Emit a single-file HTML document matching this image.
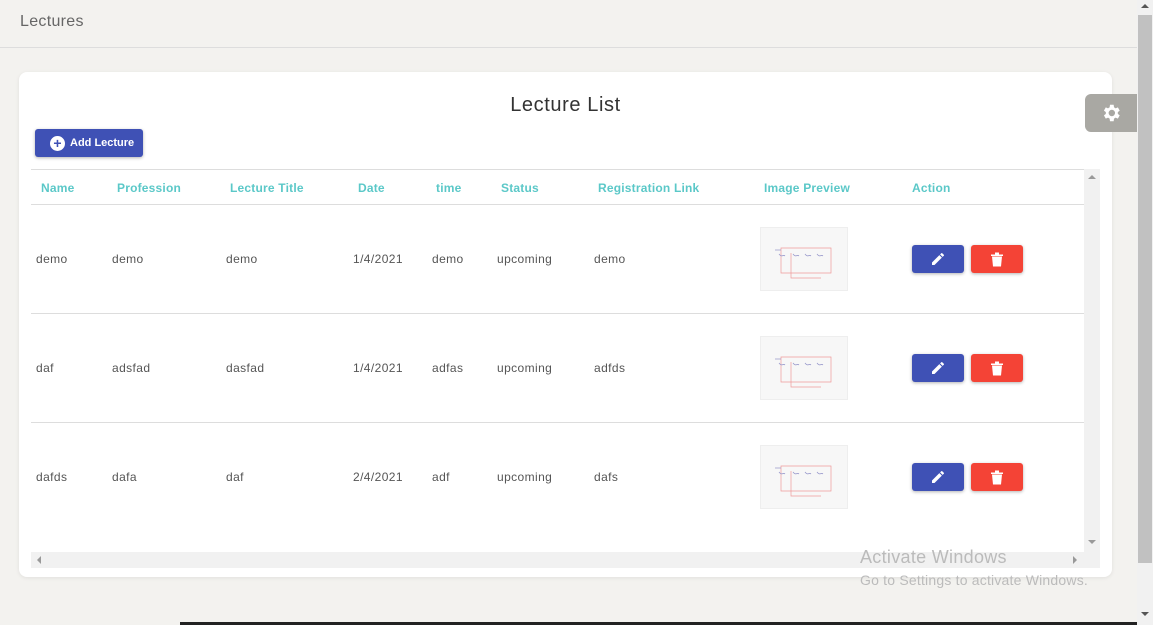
<!DOCTYPE html>
<html><head><style>
*{margin:0;padding:0;box-sizing:border-box}
body{width:1153px;height:625px;overflow:hidden;background:#f3f2ef;font-family:"Liberation Sans",sans-serif;position:relative;font-size:12px;color:#444}
.a{position:absolute}
.hd{color:#5bc8c8;font-weight:bold;font-size:12px;top:181px;letter-spacing:.2px}
.c{font-size:12px;color:#555;letter-spacing:.4px}
.btn{position:absolute;width:52px;height:28px;border-radius:3px;box-shadow:0 1px 3px rgba(0,0,0,.3);display:flex;align-items:center;justify-content:center}
.img{position:absolute;width:88px;height:64px;background:#f7f7f7;border:1px solid #eee}
</style></head><body>
<div class="a" style="left:20px;top:13px;font-size:16px;color:#666;letter-spacing:.3px">Lectures</div>
<div class="a" style="left:0;top:47px;width:1137px;height:1px;background:#ddd"></div>
<div class="a" style="left:19px;top:72px;width:1093px;height:505px;background:#fff;border-radius:8px;box-shadow:0 1px 4px rgba(0,0,0,.08)"></div>
<div class="a" style="left:0;top:94px;width:1131px;text-align:center;font-size:20px;color:#333;letter-spacing:.6px">Lecture List</div>
<div class="a" style="left:35px;top:129px;width:108px;height:28px;background:#3f51b5;border-radius:3px;box-shadow:0 1px 3px rgba(0,0,0,.3);color:#fff;font-weight:bold;font-size:11px;display:flex;align-items:center;padding-left:15px"><span style="width:15px;height:15px;border-radius:50%;background:#fff;color:#3f51b5;display:inline-flex;align-items:center;justify-content:center;font-size:14px;margin-right:5px;line-height:1">+</span>Add Lecture</div>
<div class="a" style="left:31px;top:169px;width:1053px;height:1px;background:#ddd"></div>
<div class="a" style="left:31px;top:204px;width:1053px;height:1px;background:#ddd"></div>
<div class="a" style="left:31px;top:313px;width:1053px;height:1px;background:#ddd"></div>
<div class="a" style="left:31px;top:422px;width:1053px;height:1px;background:#ddd"></div>
<div class="a" style="left:1084px;top:169px;width:16px;height:383px;background:#f1f1f1"></div>
<div class="a" style="left:1088px;top:175px;border:4px solid transparent;border-bottom:4px solid #999;border-top:0"></div>
<div class="a" style="left:1088px;top:540px;border:4px solid transparent;border-top:4px solid #999;border-bottom:0"></div>
<div class="a" style="left:31px;top:552px;width:1069px;height:16px;background:#f1f1f1"></div>
<div class="a" style="left:37px;top:556px;border:4px solid transparent;border-right:4px solid #999;border-left:0"></div>
<div class="a" style="left:1073px;top:556px;border:4px solid transparent;border-left:4px solid #999;border-right:0"></div>
<div class="a hd" style="left:41px">Name</div>
<div class="a hd" style="left:117px">Profession</div>
<div class="a hd" style="left:230px">Lecture Title</div>
<div class="a hd" style="left:358px">Date</div>
<div class="a hd" style="left:436px">time</div>
<div class="a hd" style="left:501px">Status</div>
<div class="a hd" style="left:598px">Registration Link</div>
<div class="a hd" style="left:764px">Image Preview</div>
<div class="a hd" style="left:912px">Action</div>

<div class="a c" style="top:252px;left:36px">demo</div><div class="a c" style="top:252px;left:112px">demo</div><div class="a c" style="top:252px;left:226px">demo</div><div class="a c" style="top:252px;left:353px">1/4/2021</div><div class="a c" style="top:252px;left:432px">demo</div><div class="a c" style="top:252px;left:497px">upcoming</div><div class="a c" style="top:252px;left:594px">demo</div>
<div class="a c" style="top:361px;left:36px">daf</div><div class="a c" style="top:361px;left:112px">adsfad</div><div class="a c" style="top:361px;left:226px">dasfad</div><div class="a c" style="top:361px;left:353px">1/4/2021</div><div class="a c" style="top:361px;left:432px">adfas</div><div class="a c" style="top:361px;left:497px">upcoming</div><div class="a c" style="top:361px;left:594px">adfds</div>
<div class="a c" style="top:470px;left:36px">dafds</div><div class="a c" style="top:470px;left:112px">dafa</div><div class="a c" style="top:470px;left:226px">daf</div><div class="a c" style="top:470px;left:353px">2/4/2021</div><div class="a c" style="top:470px;left:432px">adf</div><div class="a c" style="top:470px;left:497px">upcoming</div><div class="a c" style="top:470px;left:594px">dafs</div>

<div class="img" style="left:760px;top:227px"><svg width="88" height="64"><g fill="none" stroke="#e99" stroke-width=".7"><path d="M20 20H70V45H20Z M30 25V50H60"/></g><g fill="none" stroke="#99c" stroke-width=".8"><path d="M14 22h6M18 26c3 4 4 0 6 2M32 26c3 4 4 0 6 2M44 26c3 4 4 0 6 2M56 26c3 4 4 0 6 2"/></g></svg></div>
<div class="img" style="left:760px;top:336px"><svg width="88" height="64"><g fill="none" stroke="#e99" stroke-width=".7"><path d="M20 20H70V45H20Z M30 25V50H60"/></g><g fill="none" stroke="#99c" stroke-width=".8"><path d="M14 22h6M18 26c3 4 4 0 6 2M32 26c3 4 4 0 6 2M44 26c3 4 4 0 6 2M56 26c3 4 4 0 6 2"/></g></svg></div>
<div class="img" style="left:760px;top:445px"><svg width="88" height="64"><g fill="none" stroke="#e99" stroke-width=".7"><path d="M20 20H70V45H20Z M30 25V50H60"/></g><g fill="none" stroke="#99c" stroke-width=".8"><path d="M14 22h6M18 26c3 4 4 0 6 2M32 26c3 4 4 0 6 2M44 26c3 4 4 0 6 2M56 26c3 4 4 0 6 2"/></g></svg></div>

<div class="btn" style="left:912px;top:245px;background:#3f51b5"><svg width="16" height="16" viewBox="0 0 24 24"><path fill="#fff" d="M3 17.25V21h3.75L17.8 9.94l-3.75-3.75zM20.7 7.04a1 1 0 000-1.41l-2.34-2.34a1 1 0 00-1.41 0l-1.83 1.83 3.75 3.75z"/></svg></div>
<div class="btn" style="left:971px;top:245px;background:#f44336"><svg width="12" height="15" viewBox="0 0 12 14"><path fill="#fff" d="M0 2h12v1.5H0zM4 0h4v2H4zM1 4h10l-1 10H2z"/></svg></div>
<div class="btn" style="left:912px;top:354px;background:#3f51b5"><svg width="16" height="16" viewBox="0 0 24 24"><path fill="#fff" d="M3 17.25V21h3.75L17.8 9.94l-3.75-3.75zM20.7 7.04a1 1 0 000-1.41l-2.34-2.34a1 1 0 00-1.41 0l-1.83 1.83 3.75 3.75z"/></svg></div>
<div class="btn" style="left:971px;top:354px;background:#f44336"><svg width="12" height="15" viewBox="0 0 12 14"><path fill="#fff" d="M0 2h12v1.5H0zM4 0h4v2H4zM1 4h10l-1 10H2z"/></svg></div>
<div class="btn" style="left:912px;top:463px;background:#3f51b5"><svg width="16" height="16" viewBox="0 0 24 24"><path fill="#fff" d="M3 17.25V21h3.75L17.8 9.94l-3.75-3.75zM20.7 7.04a1 1 0 000-1.41l-2.34-2.34a1 1 0 00-1.41 0l-1.83 1.83 3.75 3.75z"/></svg></div>
<div class="btn" style="left:971px;top:463px;background:#f44336"><svg width="12" height="15" viewBox="0 0 12 14"><path fill="#fff" d="M0 2h12v1.5H0zM4 0h4v2H4zM1 4h10l-1 10H2z"/></svg></div>

<div class="a" style="left:1085px;top:94px;width:52px;height:38px;background:#a9a8a3;border-radius:6px 0 0 6px;display:flex;align-items:center;justify-content:center"><svg width="22" height="22" viewBox="0 0 24 24"><path fill="#fff" d="M19.4 13a7.5 7.5 0 000-2l2.1-1.6-2-3.5-2.5 1a7 7 0 00-1.7-1L14.9 3h-4l-.4 2.9a7 7 0 00-1.7 1l-2.5-1-2 3.5L6.4 11a7.5 7.5 0 000 2l-2.1 1.6 2 3.5 2.5-1a7 7 0 001.7 1l.4 2.9h4l.4-2.9a7 7 0 001.7-1l2.5 1 2-3.5zM12.9 15.5a3.5 3.5 0 110-7 3.5 3.5 0 010 7z"/></svg></div>

<div class="a" style="left:860px;top:547px;font-size:18px;color:#bbb;letter-spacing:.3px">Activate Windows</div>
<div class="a" style="left:860px;top:572px;font-size:14px;color:#bbb;letter-spacing:.2px">Go to Settings to activate Windows.</div>

<div class="a" style="left:1137px;top:0;width:16px;height:625px;background:#f1f1f1"></div>
<div class="a" style="left:1138px;top:15px;width:14px;height:548px;background:#c1c1c1"></div>
<div class="a" style="left:1141px;top:4px;border:4px solid transparent;border-bottom:4px solid #555;border-top:0"></div>
<div class="a" style="left:1141px;top:612px;border:4px solid transparent;border-top:4px solid #555;border-bottom:0"></div>
<div class="a" style="left:180px;top:622px;width:957px;height:3px;background:#222"></div>
</body></html>
